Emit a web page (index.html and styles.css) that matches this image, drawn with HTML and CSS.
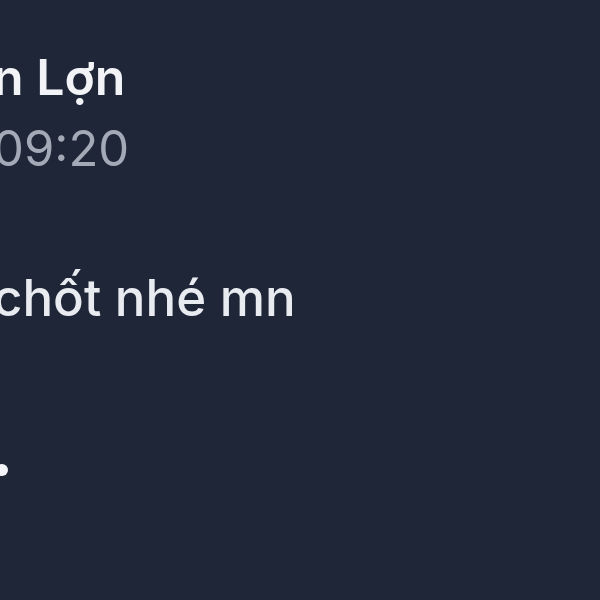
FILE: index.html
```html
<!DOCTYPE html>
<html lang="vi">
<head>
  <meta charset="UTF-8">
  <title>Tin nhắn</title>
  <link rel="stylesheet" href="styles.css">
</head>
<body>
  <div class="message">
    <div class="sender">n Lợn</div>
    <div class="time">09:20</div>
    <p class="text">chốt nhé mn</p>
    <span class="dot"></span>
  </div>
</body>
</html>
```

FILE: styles.css
```css
html, body {
  margin: 0;
  height: 100%;
}
body {
  background-color: #1e2637;
  font-family: Inter, "Noto Sans", sans-serif;
  overflow: hidden;
}
.message {
  display: flex;
  flex-direction: column;
  align-items: flex-start;
  margin-left: -7px;
  padding-top: 47px;
}
.sender {
  font-size: 50px;
  font-weight: 600;
  color: #f1f3f7;
  line-height: 60px;
}
.time {
  font-size: 49px;
  color: #a3a9b6;
  line-height: 60px;
  margin-top: 12px;
}
.text {
  margin: 89px 0 0;
  font-size: 51px;
  font-weight: 500;
  color: #e8ebf0;
  line-height: 60px;
}
.dot {
  width: 12px;
  height: 12px;
  border-radius: 50%;
  background-color: #f4f5f8;
  margin: 136px 0 0 3px;
}
```
